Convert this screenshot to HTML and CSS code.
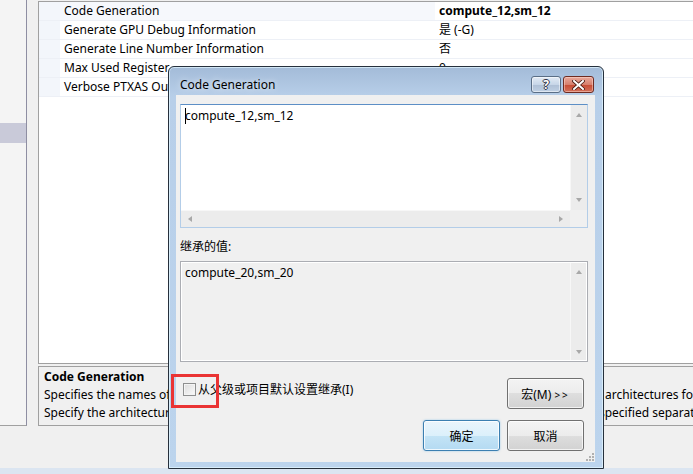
FILE: index.html
```html
<!DOCTYPE html>
<html lang="zh-CN">

<head>
  <meta charset="UTF-8">
  <meta name="viewport" content="width=device-width, initial-scale=1.0">
  <title>Code Generation</title>

  <link rel="stylesheet" href="styles.css">
</head>

<body>
  <div class="screen">
    <div class="workspace">
      <div class="nav">
        <div class="nav-item"></div>
      </div>

      <div class="props">
        <div class="grid">
          <div class="row row-current">
            <span class="gutter"></span>
            <span class="name">Code Generation</span>
            <span class="value strong">compute_12,sm_12</span>
          </div>
          <div class="row">
            <span class="gutter"></span>
            <span class="name">Generate GPU Debug Information</span>
            <span class="value">是 (-G)</span>
          </div>
          <div class="row">
            <span class="gutter"></span>
            <span class="name">Generate Line Number Information</span>
            <span class="value">否</span>
          </div>
          <div class="row">
            <span class="gutter"></span>
            <span class="name">Max Used Register</span>
            <span class="value">0</span>
          </div>
          <div class="row">
            <span class="gutter"></span>
            <span class="name">Verbose PTXAS Output</span>
            <span class="value">否</span>
          </div>
        </div>

        <div class="desc">
          <div class="desc-title">Code Generation</div>
          <div class="desc-line">Specifies the names of the NVCC code generation targets as a list of supported virtual and real GPU architectures for which to generate device code.</div>
          <div class="desc-line">Specify the architecture pairs as compute_XX,sm_XX; where several such pairs are needed they are specified separated by semicolons.</div>
        </div>
      </div>
    </div>

    <div class="statusbar"></div>

    <!-- property editor dialog -->
    <div class="dialog">
      <div class="titlebar">
        <span class="title">Code Generation</span>
        <div class="caption-buttons">
          <span class="cap-btn cap-help">?</span>
          <span class="cap-btn cap-close">
            <svg width="13" height="10" viewBox="0 0 13 10">
              <path d="M2 1 L11 9 M11 1 L2 9" stroke="#4a1c14" stroke-width="3.6" stroke-linecap="square" />
              <path d="M2 1 L11 9 M11 1 L2 9" stroke="#fff" stroke-width="2" stroke-linecap="square" />
            </svg>
          </span>
        </div>
      </div>

      <div class="client">
        <div class="textbox editing">
          <div class="textbox-text"><span class="caret"></span>compute_12,sm_12</div>
          <div class="vscroll">
            <span class="arrow arrow-up"></span>
            <span class="arrow arrow-down"></span>
          </div>
          <div class="hscroll">
            <span class="arrow arrow-left"></span>
            <span class="arrow arrow-right"></span>
          </div>
          <div class="corner"></div>
        </div>

        <div class="field-label">继承的值:</div>

        <div class="textbox inherited">
          <div class="textbox-text">compute_20,sm_20</div>
          <div class="vscroll">
            <span class="arrow arrow-up"></span>
            <span class="arrow arrow-down"></span>
          </div>
        </div>

        <div class="options-row">
          <label class="check">
            <span class="check-box"></span>
            <span class="check-text">从父级或项目默认设置继承(I)</span>
          </label>
          <button class="btn">宏(M) <span class="chevrons">&gt;&gt;</span></button>
        </div>

        <div class="actions">
          <button class="btn btn-default">确定</button>
          <button class="btn">取消</button>
        </div>

        <svg class="grip" width="11" height="11" viewBox="0 0 11 11">
          <g fill="#b0b0b0">
            <rect x="8" y="2" width="2" height="2" />
            <rect x="5" y="5" width="2" height="2" />
            <rect x="8" y="5" width="2" height="2" />
            <rect x="2" y="8" width="2" height="2" />
            <rect x="5" y="8" width="2" height="2" />
            <rect x="8" y="8" width="2" height="2" />
          </g>
        </svg>
      </div>
    </div>

    <!-- annotation box over the checkbox -->
    <div class="highlight"></div>
  </div>
</body>

</html>
```

FILE: styles.css
```css
body {
  margin: 0;
  font-family: 'Noto Sans', 'Noto Sans CJK SC', sans-serif;
  font-size: 12px;
  color: #000;
  background-color: #f0f0f0;
}

.screen {
  position: relative;
  width: 693px;
  height: 474px;
  overflow: hidden;
  display: flex;
  flex-direction: column;
}

/* main workspace */

.workspace {
  display: flex;
  height: 426px;
  flex-shrink: 0;
}

.nav {
  flex-shrink: 0;
  width: 26px;
  height: 425px;
  background-color: #f4f4f4;
  border-right: 1px solid #8e8ea2;
  border-bottom: 1px solid #a0a0a0;
}

.nav-item {
  margin-top: 123px;
  height: 20px;
  background-color: #c9cad9;
}

.props {
  flex: 1;
  min-width: 0;
  display: flex;
  flex-direction: column;
  margin-left: 11px;
  margin-right: -30px;
  padding-top: 1px;
}

.grid {
  height: 361px;
  border: 1px solid #a0a0a0;
  background-color: #fff;
  overflow: hidden;
}

.row {
  display: flex;
  height: 18px;
  line-height: 18px;
  border-bottom: 1px solid #edf0f6;
  white-space: nowrap;
}

.gutter {
  flex-shrink: 0;
  width: 21px;
  background-color: #f3f6fb;
}

.name {
  flex-shrink: 0;
  width: 371px;
  padding-left: 4px;
  overflow: hidden;
}

.row-current .name {
  background-color: #f6f8fc;
}

.value {
  flex: 1;
  padding-left: 4px;
}

.strong {
  font-weight: bold;
}

.desc {
  margin-top: 2px;
  height: 57px;
  padding: 1px 5px 0;
  border: 1px solid #a0a0a0;
  background-color: #f0f0f0;
  line-height: 18px;
  white-space: nowrap;
  overflow: hidden;
}

.desc-title {
  font-weight: bold;
}

.statusbar {
  flex: 1;
  background-color: #f0f0f0;
  border-bottom: 6px solid #dbe5f1;
}

/* dialog window */

.dialog {
  position: absolute;
  left: 168px;
  top: 66px;
  width: 434px;
  height: 401px;
  display: flex;
  flex-direction: column;
  border: 1px solid #26303c;
  border-radius: 6px 6px 0 0;
  background: linear-gradient(#a3bbd8, #b8cfe9 30px, #bcd4ed);
  box-shadow: inset 0 0 0 1px rgba(225, 245, 255, 0.75);
}

.titlebar {
  box-sizing: border-box;
  height: 28px;
  padding: 7px 9px 0 11px;
  display: flex;
  align-items: center;
  justify-content: space-between;
}

.title {
  font-size: 12px;
  text-shadow: 0 0 6px rgba(255, 255, 255, 0.9);
}

.caption-buttons {
  display: flex;
  gap: 2px;
}

.cap-btn {
  box-sizing: border-box;
  height: 17px;
  display: flex;
  align-items: center;
  justify-content: center;
  border-radius: 3px;
}

.cap-help {
  width: 30px;
  border: 1px solid #5a6e86;
  background: linear-gradient(#e3ebf5, #c7d6e8 50%, #aebfd5 50%, #bfd0e4);
  box-shadow: inset 0 0 0 1px rgba(255, 255, 255, 0.5);
  color: #fff;
  font-weight: bold;
  font-size: 12px;
  text-shadow: 1px 0 0 #334, -1px 0 0 #334, 0 1px 0 #334, 0 -1px 0 #334;
}

.cap-close {
  width: 31px;
  border: 1px solid #6e2b22;
  background: linear-gradient(#e9a99c, #d7806e 50%, #c74a33 50%, #d2705a);
  box-shadow: inset 0 0 0 1px rgba(255, 220, 210, 0.5);
}

.client {
  position: relative;
  flex: 1;
  margin: 0 8px 6px 7px;
  padding: 9px 7px 0 4px;
  background-color: #f0f0f0;
  display: flex;
  flex-direction: column;
}

.textbox {
  display: grid;
  grid-template-columns: 1fr 17px;
  border: 1px solid #abadb3;
}

.editing {
  height: 122px;
  grid-template-rows: 1fr 17px;
  border-color: #5d8fc6 #b3cde8 #b3cde8 #b3cde8;
  background-color: #fff;
}

.inherited {
  height: 99px;
  margin-top: 5px;
  background-color: #f0f0f0;
  box-shadow: inset 0 0 0 1px #fff;
}

.textbox-text {
  padding: 2px 4px;
  line-height: 18px;
}

.caret {
  display: inline-block;
  width: 1px;
  height: 16px;
  margin-right: -1px;
  vertical-align: -4px;
  background-color: #000;
}

.vscroll {
  display: flex;
  flex-direction: column;
  justify-content: space-between;
  align-items: center;
  padding: 8px 0;
  background-color: #ececec;
  border-left: 1px solid #f7f7f7;
}

.inherited .vscroll {
  margin: 1px 1px 1px 0;
  padding: 7px 0 6px;
}

.hscroll {
  display: flex;
  justify-content: space-between;
  align-items: center;
  padding: 0 7px 0 7px;
  background-color: #ececec;
  border-top: 1px solid #f7f7f7;
}

.corner {
  background-color: #f0f0f0;
}

.arrow {
  width: 0;
  height: 0;
  border: 3px solid transparent;
}

.arrow-up {
  border-bottom: 4px solid #a8a8a8;
  border-top-width: 0;
}

.arrow-down {
  border-top: 4px solid #a8a8a8;
  border-bottom-width: 0;
}

.arrow-left {
  border-right: 4px solid #a8a8a8;
  border-left-width: 0;
}

.arrow-right {
  border-left: 4px solid #a8a8a8;
  border-right-width: 0;
}

.field-label {
  margin-top: 10px;
  line-height: 18px;
}

.options-row {
  display: flex;
  justify-content: space-between;
  align-items: flex-start;
  margin-top: 16px;
  padding: 0 4px 0 3px;
}

.check {
  display: flex;
  align-items: center;
  gap: 2px;
  margin-top: 5px;
}

.check-box {
  box-sizing: border-box;
  width: 13px;
  height: 13px;
  border: 1px solid #8e8f8f;
  background: linear-gradient(135deg, #dcdcdc, #fbfbfb);
  box-shadow: inset 0 0 0 1px #f4f4f4;
}

.check-text {
  font-size: 12px;
  line-height: 13px;
}

.btn {
  box-sizing: border-box;
  width: 77px;
  height: 31px;
  padding: 0;
  border: 1px solid #707070;
  border-radius: 3px;
  background: linear-gradient(#f3f3f3, #ececec 50%, #dedede 50%, #d2d2d2);
  box-shadow: inset 0 0 0 1px rgba(255, 255, 255, 0.7);
  font-family: inherit;
  font-size: 12px;
  color: #000;
  white-space: nowrap;
}

.chevrons {
  letter-spacing: 2px;
  font-size: 10px;
}

.btn-default {
  border-color: #3c7fb1;
  background: linear-gradient(#eaf5fc, #dcf0fb 50%, #c4e4f6 50%, #b4daf2);
  box-shadow: inset 0 0 0 1px rgba(255, 255, 255, 0.8), 0 0 2px rgba(60, 160, 230, 0.5);
}

.actions {
  display: flex;
  justify-content: flex-end;
  gap: 7px;
  margin-top: 11px;
  padding-right: 4px;
}

.grip {
  position: absolute;
  right: 0;
  bottom: 0;
}

.highlight {
  position: absolute;
  left: 171px;
  top: 374px;
  width: 42px;
  height: 28px;
  border: 3px solid #ea3434;
}
```
